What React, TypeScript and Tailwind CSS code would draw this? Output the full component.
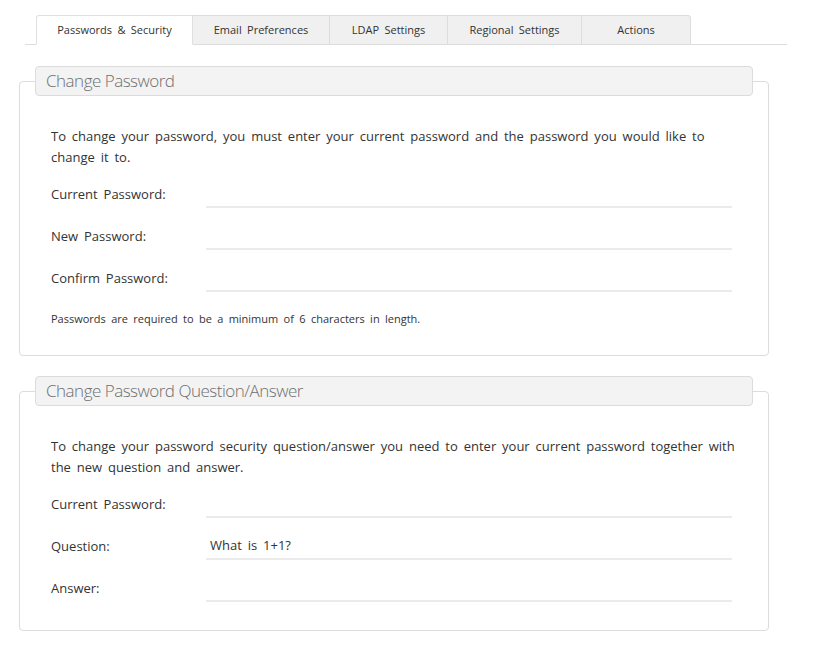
import React from "react";

const tabs = [
  { label: "Passwords & Security", w: "w-[157px]", active: true },
  { label: "Email Preferences", w: "w-[137px]" },
  { label: "LDAP Settings", w: "w-[118px]" },
  { label: "Regional Settings", w: "w-[134px]" },
  { label: "Actions", w: "w-[109px]" },
];

function Row({ label, value = "" }: { label: string; value?: string }) {
  return (
    <div className="flex items-center">
      <label className="w-[155px] shrink-0 pt-[1px] text-[13px] text-[#333]">{label}</label>
      <div className="h-[28px] flex-1 border-b-2 border-[#ebebeb] pl-[4px] text-[13px] leading-[27px] text-[#333]">
        {value}
      </div>
    </div>
  );
}

function Panel({
  title,
  text,
  children,
  className = "",
}: {
  title: string;
  text: string;
  children: React.ReactNode;
  className?: string;
}) {
  return (
    <fieldset
      className={`ml-[19px] w-[750px] rounded-[4px] border border-[#dcdcdc] px-[15px] pb-[28px] ${className}`}
    >
      <legend className="h-[30px] w-[718px] rounded-[4px] border border-[#dcdcdc] bg-[#f3f3f3] pl-[10px] text-[17px] font-light leading-[28px] tracking-[-0.5px] text-[#6f6f6f] [word-spacing:0px]">
        {title}
      </legend>
      <div className="pl-[16px] pt-[30px]">
        <p className="mb-[12px] w-[695px] text-[13px] leading-[21px] text-[#333]">{text}</p>
        <div className="flex w-[681px] flex-col gap-[14px]">{children}</div>
      </div>
    </fieldset>
  );
}

export default function App() {
  return (
    <div className="min-h-[647px] bg-white pt-[15px] [font-family:'Open_Sans',sans-serif] [word-spacing:2.5px]">
      <div className="ml-[25px] flex w-[762px] border-b border-[#dddddd] pl-[11px]">
        {tabs.map((t, i) => (
          <div
            key={t.label}
            className={`-mb-px flex h-[30px] items-center justify-center border-t border-r text-[11px] text-[#333] ${t.w} ${
              i === 0 ? "rounded-tl-[3px] border-l" : ""
            } ${i === tabs.length - 1 ? "rounded-tr-[3px]" : ""} ${
              t.active
                ? "border-[#e0e0e0] bg-white border-b border-b-white"
                : "border-[#dddddd] bg-[#f0f0f0] border-b border-b-[#dddddd]"
            }`}
          >
            {t.label}
          </div>
        ))}
      </div>

      <div className="mt-[21px]">
        <Panel
          title="Change Password"
          text="To change your password, you must enter your current password and the password you would like to change it to."
        >
          <Row label="Current Password:" />
          <Row label="New Password:" />
          <Row label="Confirm Password:" />
          <p className="mt-[5px] text-[11px] leading-[16px] text-[#333]">
            Passwords are required to be a minimum of 6 characters in length.
          </p>
        </Panel>

        <Panel
          className="mt-[20px]"
          title="Change Password Question/Answer"
          text="To change your password security question/answer you need to enter your current password together with the new question and answer."
        >
          <Row label="Current Password:" />
          <Row label="Question:" value="What is 1+1?" />
          <Row label="Answer:" />
        </Panel>
      </div>
    </div>
  );
}
